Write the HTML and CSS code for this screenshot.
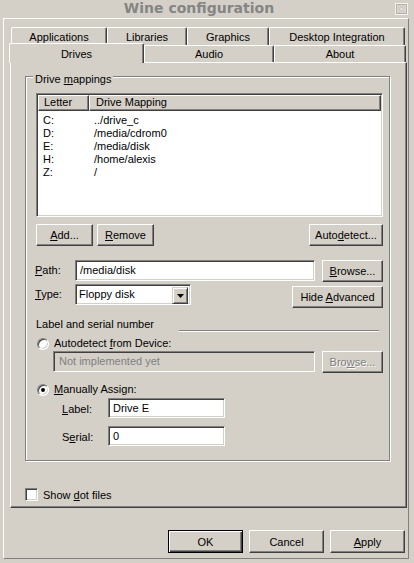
FILE: index.html
```html
<!DOCTYPE html>
<html lang="en">
<head>
    <meta charset="UTF-8">
    <meta name="viewport" content="width=device-width, initial-scale=1.0">
    <title>Wine configuration</title>
    <link rel="stylesheet" href="styles.css">
</head>
<body>
    <!-- title bar -->
    <div class="titlebar">
        <span></span>
        <h1 class="title">Wine configuration</h1>
        <span class="close">
            <svg width="13" height="12" viewBox="0 0 13 12">
                <rect x="0.5" y="0.5" width="12" height="11" fill="#dcd9d2" stroke="#f4f3f0"/>
                <rect x="1.5" y="1.5" width="10" height="9" fill="none" stroke="#b4b0a8"/>
                <path d="M3.5 3 L9.5 9 M9.5 3 L3.5 9" stroke="#b4b0a8" stroke-width="2"/>
                <path d="M3.5 3 L9.5 9 M9.5 3 L3.5 9" stroke="#fff" stroke-width="1"/>
            </svg>
        </span>
    </div>

    <div class="window">
        <!-- tabs -->
        <div class="tab-row back">
            <div class="tab w-apps">Applications</div>
            <div class="tab w-libs">Libraries</div>
            <div class="tab w-graphics">Graphics</div>
            <div class="tab w-desktop">Desktop Integration</div>
        </div>
        <div class="tab-row front">
            <div class="tab active w-drives">Drives</div>
            <div class="tab w-audio">Audio</div>
            <div class="tab w-about">About</div>
        </div>

        <div class="panel">
            <div class="group">
                <div class="group-title">Drive <u>m</u>appings</div>

                <!-- drive list -->
                <div class="list">
                    <div class="list-head">
                        <div class="col-letter">Letter</div>
                        <div class="col-map">Drive Mapping</div>
                    </div>
                    <div class="list-body">
                        <div class="row"><span class="col-letter">C:</span><span class="col-map">../drive_c</span></div>
                        <div class="row"><span class="col-letter">D:</span><span class="col-map">/media/cdrom0</span></div>
                        <div class="row"><span class="col-letter">E:</span><span class="col-map">/media/disk</span></div>
                        <div class="row"><span class="col-letter">H:</span><span class="col-map">/home/alexis</span></div>
                        <div class="row"><span class="col-letter">Z:</span><span class="col-map">/</span></div>
                    </div>
                </div>

                <div class="btn-row">
                    <button class="btn w-add"><u>A</u>dd...</button>
                    <button class="btn w-remove"><u>R</u>emove</button>
                    <button class="btn w-autodetect">Auto<u>d</u>etect...</button>
                </div>

                <!-- path / type -->
                <div class="field-row path-row">
                    <span class="field-label"><u>P</u>ath:</span>
                    <div class="input w-path">/media/disk</div>
                    <button class="btn w-browse"><u>B</u>rowse...</button>
                </div>
                <div class="field-row type-row">
                    <span class="field-label"><u>T</u>ype:</span>
                    <div class="input select">
                        <span class="select-value">Floppy disk</span>
                        <span class="select-arrow">
                            <svg width="7" height="4" viewBox="0 0 7 4"><polygon points="0,0 7,0 3.5,4" fill="#000"/></svg>
                        </span>
                    </div>
                    <button class="btn w-advanced">Hide <u>A</u>dvanced</button>
                </div>

                <!-- label and serial -->
                <div class="section-head">
                    <span class="section-title">Label and serial number</span>
                    <span class="sep"></span>
                </div>
                <div class="radio-row first">
                    <span class="radio"></span>
                    <span>Autodetect <u>f</u>rom Device:</span>
                </div>
                <div class="field-row device-row">
                    <div class="input disabled w-device">Not implemented yet</div>
                    <button class="btn disabled w-browse">Bro<u>w</u>se...</button>
                </div>
                <div class="radio-row second">
                    <span class="radio checked"><span class="dot"></span></span>
                    <span><u>M</u>anually Assign:</span>
                </div>
                <div class="field-row label-row">
                    <span class="small-label"><u>L</u>abel:</span>
                    <div class="input w-small">Drive E</div>
                </div>
                <div class="field-row serial-row">
                    <span class="small-label">S<u>e</u>rial:</span>
                    <div class="input w-small">0</div>
                </div>
            </div>

            <div class="check-row">
                <span class="checkbox"></span>
                <span>Show <u>d</u>ot files</span>
            </div>
        </div>

        <!-- dialog buttons -->
        <div class="dialog-buttons">
            <button class="btn default">OK</button>
            <button class="btn">Cancel</button>
            <button class="btn"><u>A</u>pply</button>
        </div>
    </div>
</body>
</html>
```

FILE: styles.css
```css
* {
    box-sizing: border-box;
}

body {
    margin: 0;
    width: 414px;
    height: 563px;
    overflow: hidden;
    background-color: #d4d0c8;
    font-family: "Liberation Sans", Arial, sans-serif;
    font-size: 11px;
    color: #000;
}

u {
    text-decoration: underline;
    text-underline-offset: 1px;
}

/* title bar */
.titlebar {
    height: 18px;
    display: grid;
    grid-template-columns: 1fr auto 1fr;
}

.title {
    margin: 0;
    padding-right: 16px;
    font-family: "DejaVu Sans", sans-serif;
    font-weight: bold;
    font-size: 14px;
    line-height: 17px;
    color: #858585;
}

.close {
    justify-self: end;
    margin: 3px 6px 0 0;
    height: 12px;
    display: flex;
}

.window {
    margin-left: 3px;
    width: 406px;
    height: 541px;
    border: 1px solid;
    border-color: #fff #808080 #808080 #fff;
    padding: 8px 0 0 6px;
}

/* tabs */
.tab-row {
    display: flex;
}

.tab-row.back {
    height: 18px;
    padding-left: 1px;
}

.tab-row.front {
    height: 17px;
    margin-left: -1px;
    align-items: flex-end;
}

.tab {
    height: 100%;
    display: flex;
    align-items: center;
    justify-content: center;
    background-color: #d4d0c8;
    border-top: 1px solid #fff;
    border-left: 1px solid #fff;
    border-right: 1px solid #404040;
    border-radius: 2px 2px 0 0;
    box-shadow: inset -1px 0 #808080;
}

.tab.active {
    height: 20px;
    margin-bottom: -1px;
    padding-top: 1px;
    position: relative;
    z-index: 1;
}

.w-apps { width: 96px; }
.w-libs { width: 80px; }
.w-graphics { width: 82px; }
.w-desktop { width: 136px; }
.w-drives { width: 135px; }
.w-audio { width: 130px; }
.w-about { width: 132px; }

.panel {
    width: 397px;
    height: 446px;
    border: 1px solid;
    border-color: #fff #404040 #404040 #fff;
    box-shadow: inset -1px -1px #808080;
    padding: 13px 0 0 14px;
}

/* group box */
.group {
    width: 365px;
    height: 385px;
    border: 1px solid #808080;
    box-shadow: 1px 1px 0 #fff, inset 1px 1px 0 #fff;
    padding: 0 6px 0 10px;
}

.group-title {
    display: table;
    margin: -4px 0 0 -3px;
    padding: 0 2px;
    line-height: 13px;
    background-color: #d4d0c8;
}

/* list view */
.list {
    margin-top: 7px;
    height: 124px;
    padding: 1px;
    background-color: #fff;
    border: 1px solid;
    border-color: #808080 #fff #fff #808080;
    box-shadow: inset 1px 1px #404040, inset -1px -1px #d4d0c8;
}

.list-head {
    display: flex;
    height: 16px;
}

.list-head div {
    background-color: #d4d0c8;
    border: 1px solid;
    border-color: #fff #404040 #404040 #fff;
    box-shadow: inset -1px -1px #808080;
    line-height: 13px;
}

.list-head .col-letter {
    width: 51px;
    padding-left: 5px;
}

.list-head .col-map {
    flex: 1;
    padding-left: 6px;
}

.list-body {
    padding-top: 3px;
}

.row {
    display: flex;
    height: 13px;
    line-height: 13px;
}

.row .col-letter {
    width: 51px;
    padding-left: 5px;
}

.row .col-map {
    padding-left: 5px;
}

/* buttons */
.btn {
    height: 22px;
    padding: 0;
    font: inherit;
    color: #000;
    background-color: #d4d0c8;
    border: 1px solid;
    border-color: #fff #404040 #404040 #fff;
    box-shadow: inset -1px -1px #808080;
}

.btn.disabled {
    color: #808080;
    text-shadow: 1px 1px 0 #fff;
}

.btn-row {
    display: flex;
    gap: 4px;
    margin-top: 7px;
}

.w-add { width: 57px; }
.w-remove { width: 57px; }
.w-autodetect {
    width: 74px;
    margin-left: auto;
}

/* fields */
.field-row {
    display: flex;
    align-items: flex-start;
}

.field-label {
    width: 39px;
    line-height: 21px;
    margin-left: -1px;
    margin-right: 1px;
}

.input {
    height: 21px;
    padding-left: 4px;
    line-height: 19px;
    white-space: nowrap;
    background-color: #fff;
    border: 1px solid;
    border-color: #808080 #fff #fff #808080;
    box-shadow: inset 1px 1px #404040, inset -1px -1px #d4d0c8;
}

.path-row {
    margin-top: 14px;
}

.w-path { width: 240px; }

.w-browse {
    width: 61px;
    margin-left: 7px;
}

.type-row {
    margin-top: 2px;
    height: 24px;
}

.select {
    width: 116px;
    display: flex;
    padding: 2px 2px 2px 2px;
}

.select-value {
    flex: 1;
    line-height: 15px;
    padding-left: 1px;
}

.select-arrow {
    width: 16px;
    height: 17px;
    display: flex;
    align-items: center;
    justify-content: center;
    background-color: #d4d0c8;
    border: 1px solid;
    border-color: #d4d0c8 #404040 #404040 #d4d0c8;
    box-shadow: inset 1px 1px #fff, inset -1px -1px #808080;
}

.w-advanced {
    width: 91px;
    margin: 2px 0 0 auto;
}

.section-head {
    display: flex;
    height: 13px;
    margin-top: 10px;
    line-height: 13px;
}

.section-title {
    width: 143px;
}

.sep {
    flex: 1;
    align-self: flex-end;
    height: 2px;
    margin: 0 4px -1px 0;
    border-top: 1px solid #808080;
    border-bottom: 1px solid #fff;
}

/* radios */
.radio-row {
    display: flex;
    align-items: center;
    gap: 5px;
    height: 13px;
    line-height: 13px;
}

.radio-row.first { margin-top: 6px; }
.radio-row.second { margin-top: 10px; }

.radio {
    width: 12px;
    height: 12px;
    margin-left: 1px;
    display: flex;
    align-items: center;
    justify-content: center;
    border-radius: 50%;
    background-color: #fff;
    border: 1px solid;
    border-color: #808080 #fff #fff #808080;
    box-shadow: inset 1px 1px #404040, inset -1px -1px #d4d0c8;
}

.dot {
    width: 4px;
    height: 4px;
    border-radius: 50%;
    background-color: #000;
}

.device-row {
    margin-top: 1px;
}

.input.disabled {
    background-color: #d4d0c8;
    color: #808080;
}

.w-device {
    width: 262px;
    margin-left: 17px;
    padding-left: 5px;
}

.label-row { margin-top: 2px; }
.serial-row { margin-top: 6px; }

.small-label {
    width: 46px;
    margin-left: 26px;
    line-height: 22px;
}

.w-small {
    width: 117px;
    height: 20px;
    padding-left: 4px;
    line-height: 18px;
}

/* checkbox */
.check-row {
    display: flex;
    align-items: center;
    gap: 5px;
    margin-top: 27px;
    height: 13px;
}

.checkbox {
    width: 13px;
    height: 13px;
    background-color: #fff;
    border: 1px solid;
    border-color: #808080 #fff #fff #808080;
    box-shadow: inset 1px 1px #404040, inset -1px -1px #d4d0c8;
}

/* dialog buttons */
.dialog-buttons {
    display: flex;
    justify-content: flex-end;
    gap: 6px;
    margin-top: 22px;
    padding-right: 3px;
}

.dialog-buttons .btn {
    width: 75px;
    height: 23px;
}

.btn.default {
    border-color: #000;
    box-shadow: inset 1px 1px #fff, inset -1px -1px #404040, inset -2px -2px #808080;
}
```
